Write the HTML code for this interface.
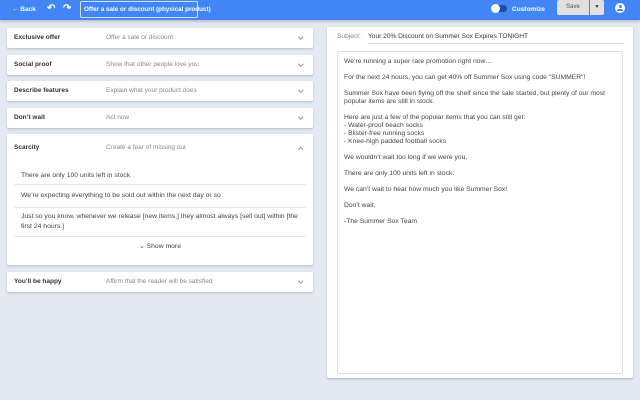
<!DOCTYPE html>
<html><head><style>
*{box-sizing:border-box;margin:0;padding:0}
body{width:640px;height:400px;background:#e3e9f2;font-family:"Liberation Sans",sans-serif;position:relative;overflow:hidden;color:#333}
.bar{position:absolute;left:0;top:0;width:640px;height:20px;background:#4285f4;box-shadow:0 1px 3px rgba(0,0,0,.25)}
.bar .t{position:absolute;color:#fff;font-size:6.5px;font-weight:bold;top:6px}
.card{position:absolute;left:7px;width:306px;background:#fff;border-radius:2px;box-shadow:0 1px 2px rgba(0,0,0,.2)}
.h{position:relative;height:20px;font-size:6.5px}
.h b{position:absolute;left:7px;top:6px;color:#333}
.h span{position:absolute;left:99px;top:6px;color:#888}
.h i{position:absolute;right:11px;top:7px;width:3.5px;height:3.5px;border-right:1px solid #999;border-bottom:1px solid #999;transform:rotate(45deg)}
.row{margin:0 7px;border-bottom:1px solid #e6e6e6;font-size:6.8px;color:#444;padding:6px 7px;line-height:10px}
.panel{position:absolute;left:327px;top:27px;width:306px;height:351px;background:#fff;border-radius:2px;box-shadow:0 1px 2px rgba(0,0,0,.25)}
.ta{position:absolute;left:10px;top:24px;width:286px;height:323px;border:1px solid #ddd;border-radius:2px;padding:6px 6px;font-size:6.75px;color:#444;line-height:8px}
.ta p{margin-bottom:8px}
</style></head><body>
<div class="bar">
<div class="t" style="left:12px">&#8592; Back</div>
<div class="t" style="left:47px;top:3px;font-size:10px">&#8630;</div>
<div class="t" style="left:63px;top:3px;font-size:10px">&#8631;</div>
<div style="position:absolute;left:80px;top:1px;width:118px;height:17px;border:1px solid #cfe0fd;border-radius:2px;color:#fff;font-size:6.3px;font-weight:bold;padding:4px 3px;white-space:nowrap">Offer a sale or discount (physical product)</div>
<div style="position:absolute;left:493px;top:5px;width:14px;height:7px;border-radius:4px;background:#1a4fa8"></div>
<div style="position:absolute;left:491px;top:4px;width:9px;height:9px;border-radius:50%;background:#fff"></div>
<div class="t" style="left:512px">Customize</div>
<div style="position:absolute;left:557px;top:0;width:32px;height:15px;background:#e0e0e0;border-radius:2px 0 0 2px;font-size:6px;color:#555;text-align:center;padding-top:4px">Save</div>
<div style="position:absolute;left:590px;top:0;width:14px;height:15px;background:#e0e0e0;border-radius:0 2px 2px 0;font-size:5px;color:#333;text-align:center;padding-top:4px">&#9660;</div>
<div style="position:absolute;left:615px;top:3px;width:10px;height:10px;border-radius:50%;background:#fff"><div style="position:absolute;left:3.5px;top:2px;width:3px;height:3px;border-radius:50%;background:#4285f4"></div><div style="position:absolute;left:2px;top:6px;width:6px;height:2px;border-radius:2px 2px 0 0;background:#4285f4"></div></div>
</div>

<div class="card" style="top:28px"><div class="h"><b>Exclusive offer</b><span>Offer a sale or discount</span><i></i></div></div>
<div class="card" style="top:55px"><div class="h"><b>Social proof</b><span>Show that other people love you</span><i></i></div></div>
<div class="card" style="top:81px"><div class="h"><b>Describe features</b><span>Explain what your product does</span><i></i></div></div>
<div class="card" style="top:108px"><div class="h"><b>Don’t wait</b><span>Act now</span><i></i></div></div>
<div class="card" style="top:134px;height:131px"><div class="h"><b style="top:10px">Scarcity</b><span style="top:10px">Create a fear of missing out</span><i style="transform:rotate(-135deg);top:14px"></i></div>
<div style="height:13px"></div>
<div class="row" style="padding:4px 7px 3px">There are only 100 units left in stock</div>
<div class="row">We’re expecting everything to be sold out within the next day or so</div>
<div class="row" style="padding:4px 7px">Just so you know, whenever we release [new items,] they almost always [sell out] within [the first 24 hours.]</div>
<div style="text-align:center;font-size:6.8px;color:#444;padding-top:5px">&#8964; Show more</div>
</div>
<div class="card" style="top:272px"><div class="h"><b>You’ll be happy</b><span>Affirm that the reader will be satisfied</span><i></i></div></div>

<div class="panel">
<div style="position:absolute;left:10px;top:6px;font-size:6.6px;color:#888">Subject:</div>
<div style="position:absolute;left:41px;top:6px;width:256px;height:11px;border-bottom:1px solid #ddd;font-size:6.6px;color:#333">Your 20% Discount on Summer Sox Expires TONIGHT</div>
<div class="ta">
<p>We’re running a super rare promotion right now…</p>
<p>For the next 24 hours, you can get 40% off Summer Sox using code "SUMMER"!</p>
<p>Summer Sox have been flying off the shelf since the sale started, but plenty of our most popular items are still in stock.</p>
<p>Here are just a few of the popular items that you can still get:<br>- Water-proof beach socks<br>- Blister-free running socks<br>- Knee-high padded football socks</p>
<p>We wouldn’t wait too long if we were you.</p>
<p>There are only 100 units left in stock.</p>
<p>We can’t wait to hear how much you like Summer Sox!</p>
<p>Don’t wait,</p>
<p>-The Summer Sox Team</p>
</div>
</div>
</body></html>
